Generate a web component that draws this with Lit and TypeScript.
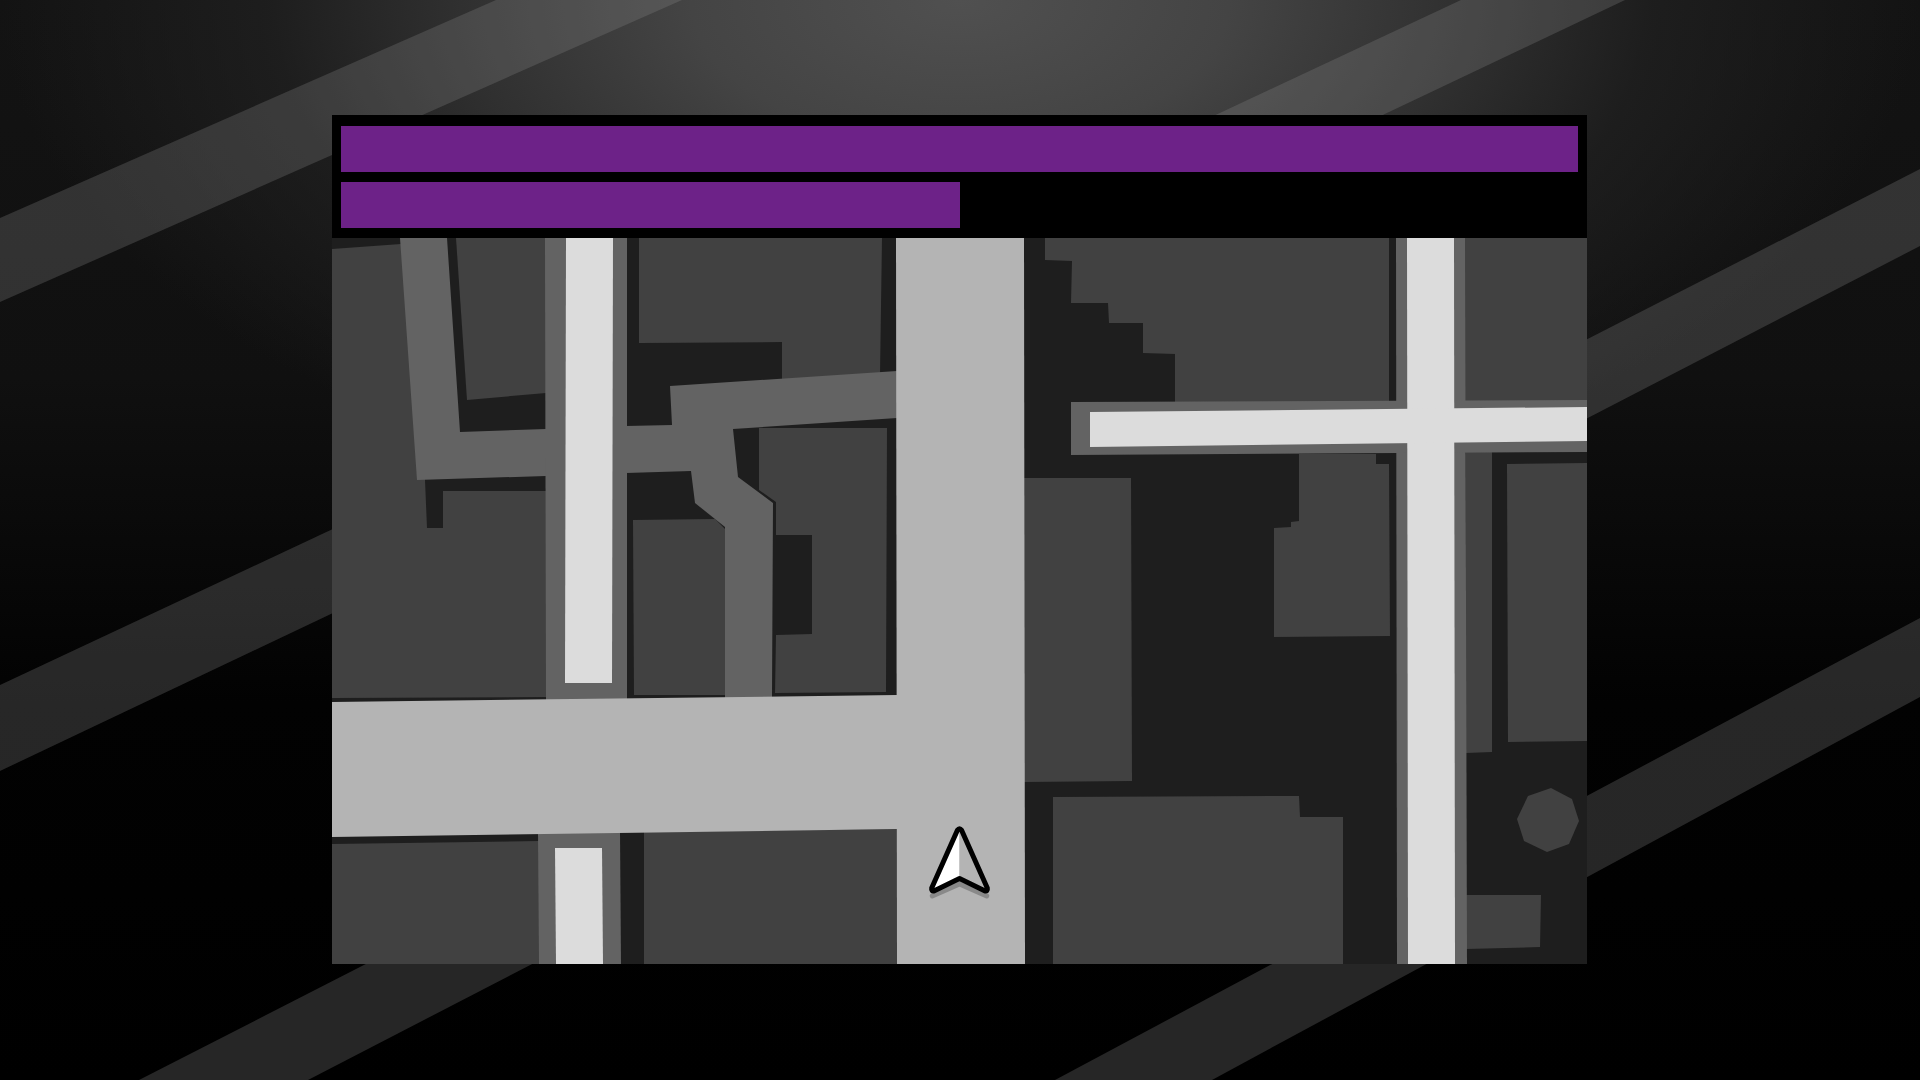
import { LitElement, html, css, svg } from "lit";
import { customElement } from "lit/decorators.js";

const BUILDINGS = [
  "332,249 401,244 425,480 427,528 443,528 443,491 546,491 546,697 332,698",
  "456,238 467,400 546,393 546,238",
  "639,238 639,343 782,342 782,385 880,375 882,238",
  "759,428 887,428 886,692 775,693 776,635 812,634 812,535 776,535 776,502 759,490",
  "633,520 715,519 726,530 726,695 634,695",
  "332,844 539,841 539,964 332,964",
  "644,832 897,829 897,964 644,964",
  "1045,238 1045,260 1072,261 1071,303 1108,303 1109,323 1143,323 1143,353 1175,354 1175,403 1389,403 1389,238",
  "1465,238 1587,238 1587,401 1465,401",
  "1024,478 1131,478 1132,781 1024,782",
  "1299,454 1376,454 1376,464 1389,464 1390,636 1274,637 1274,528 1291,527 1291,522 1299,521",
  "1466,452 1492,452 1492,752 1466,753",
  "1507,464 1587,463 1587,741 1508,742",
  "1053,797 1299,796 1300,817 1343,817 1343,964 1053,964",
  "1551,788 1572,799 1579,821 1569,844 1547,852 1524,841 1517,819 1528,796",
  "1466,895 1541,895 1540,947 1466,949",
];

const ALLEYS = [
  "400,238 447,238 460,432 546,429 546,476 417,480",
  "545,238 627,238 627,699 546,701",
  "626,426 672,425 670,386 897,371 897,418 733,429 738,477 773,503 772,698 725,698 725,527 695,503 691,471 626,473",
  "538,832 620,832 621,964 539,964",
  "1396,238 1465,238 1467,964 1397,964",
  "1071,402 1587,400 1587,452 1071,455",
];

const MAIN_ROADS = [
  "896,238 1024,238 1025,964 897,964",
  "332,702 897,695 897,829 332,837",
];

const STREETS = [
  "566,238 613,238 612,683 565,683",
  "555,848 602,848 603,964 556,964",
  "1407,238 1454,238 1455,964 1408,964",
  "1090,412 1587,407 1587,441 1090,447",
];

const BANDS = [
  "496,0 682,0 0,302 0,218",
  "1461,0 1625,0 0,771 0,685",
  "1920,169 1920,246 308,1080 139,1080",
  "1920,618 1920,697 1212,1080 1055,1080",
];

const shapes = (list: string[]) => list.map((p) => svg`<polygon points=${p}></polygon>`);

@customElement("status-bar")
export class StatusBar extends LitElement {
  static properties = { value: { type: Number }, label: { type: String } };
  declare value: number;
  declare label: string;

  static styles = css`
    :host { display: block; }
    .fill { height: 46px; background: #6d2288; }
  `;

  render() {
    return html`<div role="progressbar" aria-label=${this.label} aria-valuenow=${this.value}>
      <div class="fill" style="width:${this.value}%"></div>
    </div>`;
  }
}

@customElement("street-map")
export class StreetMap extends LitElement {
  static styles = css`
    :host { display: block; }
    .map { display: block; width: 100%; aspect-ratio: 1255 / 726; background: #1e1e1e; }
    .building { fill: #414141; }
    .alley { fill: #636363; }
    .main { fill: #b4b4b4; }
    .street { fill: #dcdcdc; }
    .shadow { fill: none; stroke: #000; stroke-opacity: 0.24; stroke-width: 5; stroke-linejoin: round; stroke-linecap: round; }
    .outline { fill: none; stroke: #000; stroke-width: 5; stroke-linejoin: round; }
    .lit { fill: #fff; }
    .shade { fill: #b4b4b4; }
  `;

  render() {
    return html`<svg class="map" viewBox="332 238 1255 726" role="img" aria-label="Street map">
      <g class="building">${shapes(BUILDINGS)}</g>
      <g class="alley">${shapes(ALLEYS)}</g>
      <g class="main">${shapes(MAIN_ROADS)}</g>
      <g class="street">${shapes(STREETS)}</g>
      <path class="shadow" d="M932.3 896 959.5 884 986.7 896"></path>
      <path class="lit" d="M959.5 828.5V878.5L934 891.2Q930.3 892 931.7 888L957.4 830.4Q958.2 828.6 959.5 828.5Z"></path>
      <path class="shade" d="M959.5 828.5V878.5L985 891.2Q988.7 892 987.3 888L961.6 830.4Q960.8 828.6 959.5 828.5Z"></path>
      <path class="outline" d="M957.4 830.2Q959.5 827.2 961.6 830.2L987.3 888Q988 891.8 984.6 890.8L959.5 878.5 934.4 890.8Q931 891.8 931.7 888Z"></path>
    </svg>`;
  }
}

@customElement("app-root")
export class AppRoot extends LitElement {
  static styles = css`
    :host { display: block; }
    .stage {
      display: grid;
      box-sizing: border-box;
      min-height: 100vh;
      background:
        radial-gradient(ellipse 50% 48% at 50% 0, #505050 0%, #444 28%, #303030 52%, rgba(32, 32, 32, 0.8) 72%, rgba(18, 18, 18, 0) 100%),
        linear-gradient(#131313, #101010 35%, #020202 65%, #000);
    }
    .bands { grid-area: 1 / 1; width: 100%; height: 100%; fill: #888; fill-opacity: 0.28; }
    .content { grid-area: 1 / 1; padding: 115px 333px 116px 332px; }
    .bars { display: grid; gap: 10px; padding: 11px 9px 10px; background: #000; }
  `;

  render() {
    return html`<main class="stage">
      <svg class="bands" viewBox="0 0 1920 1080" preserveAspectRatio="none" aria-hidden="true">${shapes(BANDS)}</svg>
      <div class="content">
        <div class="bars">
          <status-bar label="Primary" .value=${100}></status-bar>
          <status-bar label="Secondary" .value=${50}></status-bar>
        </div>
        <street-map></street-map>
      </div>
    </main>`;
  }
}
